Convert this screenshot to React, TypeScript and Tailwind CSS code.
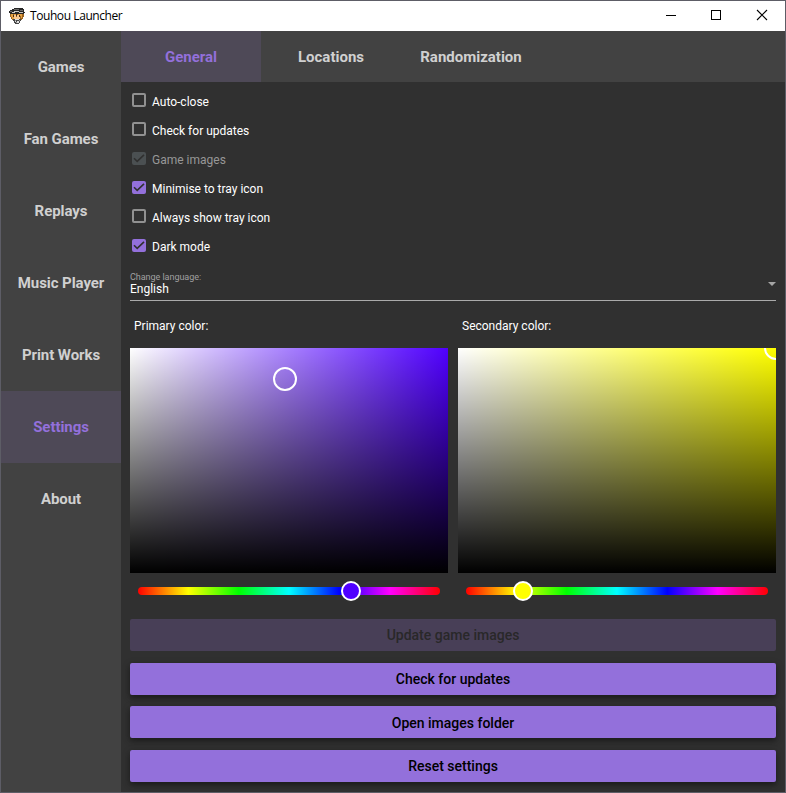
import { clsx } from "clsx";

const pages = ["Games", "Fan Games", "Replays", "Music Player", "Print Works", "Settings", "About"];
const tabs = ["General", "Locations", "Randomization"];
const options = [
  { label: "Auto-close" },
  { label: "Check for updates" },
  { label: "Game images", checked: true, disabled: true },
  { label: "Minimise to tray icon", checked: true },
  { label: "Always show tray icon" },
  { label: "Dark mode", checked: true },
];

function AppIcon() {
  return (
    <svg width="16" height="16" viewBox="0 0 16 16" shapeRendering="crispEdges">
      <path fill="#262626" d="M3 1h2V0h9v1h1v3h1v1h-1v1H1V5H0V3h1V2h2z" />
      <path fill="#6c6b6a" d="M5 1h5v1H5zM11 2h3v1h-3zM1 3h2v1H1z" />
      <path fill="#c9c7c3" d="M3 4h3v1H3zM5 3h5v1H5zM10 4h4v1h-4z" />
      <path fill="#9a641f" d="M1 6h14v3h-1v2h-1v1h-2v1H5v-1H3v-1H2V9H1z" />
      <path fill="#e5a143" d="M2 6h2v3H2zM5 6h3v1H5zM9 6h4v2H9zM3 9h2v2H3zM12 8h1v2h-1z" />
      <path fill="#fac990" d="M5 7h2v2H5zM8 7h2v2H8zM5 9h6v2H5z" />
      <path fill="#4c2d12" d="M4 7h1v2H4zM10 7h1v2h-1zM7 6h1v2H7z" />
      <path fill="#464646" d="M4 11h8v2h-1v2h-1v1H6v-1H5v-2H4z" />
      <path fill="#dedede" d="M6 11h4v1H6zM6 13h1v1H6zM8 13h2v2H8z" />
      <path fill="#999" d="M6 12h1v1H6zM10 12h1v1h-1zM7 14h1v1H7z" />
    </svg>
  );
}

function TitleBar() {
  return (
    <header className="flex h-[30px] shrink-0 items-center bg-white pl-2 text-black">
      <AppIcon />
      <span className="ml-[5px] flex-1 font-['Open_Sans','Noto_Sans',sans-serif] text-xs tracking-[-0.42px]">
        Touhou Launcher
      </span>
      <div className="flex w-[138px]">
        <svg width="46" height="30" shapeRendering="crispEdges">
          <path d="M19 14.5h10" stroke="#000" />
        </svg>
        <svg width="46" height="30" shapeRendering="crispEdges">
          <path d="M18.5 9.5h9v9h-9z" stroke="#000" fill="none" />
        </svg>
        <svg width="46" height="30">
          <path d="M18 9l10 10M28 9L18 19" stroke="#000" strokeWidth="1.1" />
        </svg>
      </div>
    </header>
  );
}

function Checkbox({ label, checked, disabled }: { label: string; checked?: boolean; disabled?: boolean }) {
  return (
    <label className="flex h-[29px] items-center pl-0.5">
      <span
        className={clsx(
          "flex w-3.5 items-center justify-center rounded-[2px]",
          !checked && "mb-[3px] h-3.5 border-2 border-[#919191]",
          checked && "mb-0.5 h-[13px]",
          checked && (disabled ? "bg-[#4b5052]" : "bg-[#9370db]"),
        )}
      >
        {checked && (
          <svg width="14" height="13" viewBox="0 0 14 13" fill="none" stroke="#303030" strokeWidth="1.6">
            <path d="M2 6.3l3.2 3.1L12 2.9" />
          </svg>
        )}
      </span>
      <span className={clsx("ml-1.5 text-xs", disabled ? "text-[#979797]" : "text-white")}>{label}</span>
    </label>
  );
}

function ColorPicker(props: { label: string; area: string; cursor: string; thumb: string }) {
  return (
    <section className="w-[318px]">
      <h2 className="h-[30px] pl-1 text-xs leading-4 text-white">{props.label}</h2>
      <div className={clsx("relative h-[225px] overflow-hidden", props.area)}>
        <div className="absolute inset-0 bg-[linear-gradient(to_right,#fff,rgba(255,255,255,0))]" />
        <div className="absolute inset-0 bg-[linear-gradient(to_top,#000,transparent)]" />
        <div className={clsx("absolute size-6 rounded-full border-2 border-white", props.cursor)} />
      </div>
      <div className="relative mx-2 mt-3.5 h-2 rounded-full bg-[linear-gradient(to_right,#f00,#ff0,#0f0,#0ff,#00f,#f0f,#f00)]">
        <div className={clsx("absolute -top-1.5 size-5 rounded-full border-2 border-white", props.thumb)} />
      </div>
    </section>
  );
}

function ActionButton({ label, disabled }: { label: string; disabled?: boolean }) {
  return (
    <button
      disabled={disabled}
      className={clsx(
        "flex h-8 w-full items-center justify-center rounded-[2px] pt-[0.4px] text-sm font-medium",
        disabled
          ? "bg-[#483f57] text-[#292829]"
          : "bg-[#9370db] text-black shadow-[0_3px_5px_rgba(0,0,0,.3),0_2px_8px_rgba(0,0,0,.2)]",
      )}
    >
      {label}
    </button>
  );
}

export default function App() {
  return (
    <div className="flex h-[793px] w-[786px] flex-col overflow-hidden border border-[#5d5d66] bg-[#303030] font-[Roboto,sans-serif]">
      <TitleBar />
      <div className="flex min-h-0 flex-1">
        <nav className="w-[120px] shrink-0 bg-[#424242]">
          {pages.map((page) => (
            <div
              key={page}
              className={clsx(
                "flex h-[72px] items-center justify-center text-[15px] font-bold tracking-[-0.07px]",
                page === "Settings" ? "bg-[#4e4957] text-[#9370db]" : "text-[#d0d0d0]",
              )}
            >
              {page}
            </div>
          ))}
        </nav>
        <main className="min-w-0 flex-1">
          <div className="flex h-[51px] bg-[#424242]">
            {tabs.map((tab) => (
              <div
                key={tab}
                className={clsx(
                  "flex w-[140px] items-center justify-center pt-px text-[15px] font-bold",
                  tab === "General" ? "bg-[#4e4957] text-[#9370db]" : "text-[#d0d0d0]",
                )}
              >
                {tab}
              </div>
            ))}
          </div>
          <div className="px-[9px] pt-[5px]">
            {options.map((option) => (
              <Checkbox key={option.label} {...option} />
            ))}
            <div className="mt-[11px] flex h-[29px] items-center justify-between border-b border-[#aaa]">
              <div className="pb-1">
                <div className="text-[9px] leading-[11px] tracking-[-0.04px] text-[#a0a0a0]">Change language:</div>
                <div className="text-xs leading-[13px] text-white">English</div>
              </div>
              <svg width="8" height="4" viewBox="0 0 8 4" className="mb-1">
                <path d="M0 0h8L4 4z" fill="#a5a5a5" />
              </svg>
            </div>
            <div className="mt-[17px] flex gap-2.5">
              <ColorPicker
                label="Primary color:"
                area="bg-[#5000ff]"
                cursor="left-[143px] top-[19px]"
                thumb="left-[203px] bg-[#5000ff]"
              />
              <ColorPicker
                label="Secondary color:"
                area="bg-[#ffff00]"
                cursor="left-[306px] -top-3"
                thumb="left-[47px] bg-[#ffff00]"
              />
            </div>
            <div className="mt-6 flex flex-col gap-[11.67px]">
              <ActionButton label="Update game images" disabled />
              <ActionButton label="Check for updates" />
              <ActionButton label="Open images folder" />
              <ActionButton label="Reset settings" />
            </div>
          </div>
        </main>
      </div>
    </div>
  );
}
